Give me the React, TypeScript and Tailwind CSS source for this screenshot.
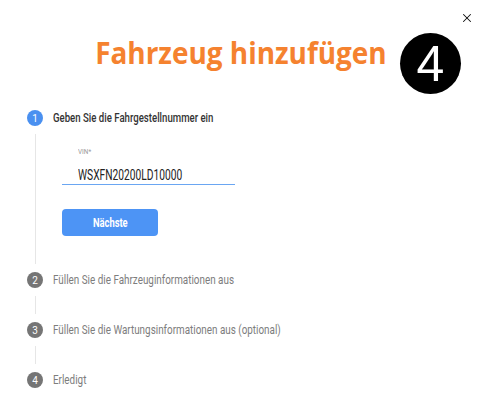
import { X } from "lucide-react";

interface StepProps {
  num: number;
  label: string;
  active?: boolean;
}

const StepHeader = ({ num, label, active }: StepProps) => {
  return (
    <div className="flex h-4 items-center gap-[10px]">
      <span
        className={
          active
            ? "flex h-4 w-4 shrink-0 items-center justify-center rounded-full bg-[#4a90f0] text-[10px] text-white"
            : "flex h-4 w-4 shrink-0 items-center justify-center rounded-full bg-[#757575] text-[10px] text-white"
        }
      >
        {num}
      </span>
      <span
        className={
          active
            ? "inline-block origin-left scale-x-[0.74] whitespace-nowrap text-[13px] font-medium text-[#333]"
            : "inline-block origin-left scale-x-[0.76] whitespace-nowrap text-[13px] text-[#7d7d7d]"
        }
      >
        {label}
      </span>
    </div>
  );
};

const App = () => {
  return (
    <div className="relative h-[400px] w-[482px] overflow-hidden bg-white font-['Roboto',sans-serif]">
      {/* close */}
      <button className="absolute right-[8px] top-[11px] text-[#111]">
        <X size={14} strokeWidth={1.8} />
      </button>

      {/* title */}
      <div className="flex justify-center pt-[36px]">
        <h1 className="relative whitespace-nowrap font-['Open_Sans',sans-serif] text-[31px] font-bold leading-[32px] text-[#f5822f]">
          <span className="inline-block scale-x-[0.9]">Fahrzeug hinzufügen</span>
          <span className="absolute left-full top-[-3px] ml-[-3px] flex h-[61px] w-[61px] items-center justify-center rounded-full bg-black font-['Liberation_Sans',sans-serif] text-[50px] font-normal leading-none text-white">
            4
          </span>
        </h1>
      </div>

      {/* stepper */}
      <div className="mt-[42px] pl-[27px]">
        <StepHeader num={1} label="Geben Sie die Fahrgestellnummer ein" active />
        <div className="my-2 ml-[8px] h-[130px] border-l border-[#e6e6e6] pl-[26px]">
          <div className="w-[173px] pt-[13px]">
            <div className="pl-4 text-[8px] leading-[10px] text-[#999]">
              <span className="inline-block origin-left scale-x-[0.8]">VIN*</span>
            </div>
            <div className="mt-[8px] h-[20px] border-b border-[#6aa6f2] pl-4 text-[14px] leading-[20px] text-[#222]">
              <span className="inline-block origin-left scale-x-[0.73]">WSXFN20200LD10000</span>
            </div>
          </div>
          <button className="mt-[24px] h-[27px] w-[96px] rounded-[4px] bg-[#4d94f5] text-[12px] font-bold text-white">
            <span className="inline-block scale-x-[0.78]">Nächste</span>
          </button>
        </div>

        <StepHeader num={2} label="Füllen Sie die Fahrzeuginformationen aus" />
        <div className="my-2 ml-[8px] h-[18px] border-l border-[#e6e6e6]" />
        <StepHeader num={3} label="Füllen Sie die Wartungsinformationen aus (optional)" />
        <div className="my-2 ml-[8px] h-[18px] border-l border-[#e6e6e6]" />
        <StepHeader num={4} label="Erledigt" />
      </div>
    </div>
  );
};

export default App;
